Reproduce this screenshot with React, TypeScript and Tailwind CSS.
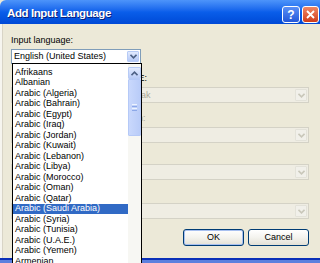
import React from "react";

const languages = [
  "Afrikaans",
  "Albanian",
  "Arabic (Algeria)",
  "Arabic (Bahrain)",
  "Arabic (Egypt)",
  "Arabic (Iraq)",
  "Arabic (Jordan)",
  "Arabic (Kuwait)",
  "Arabic (Lebanon)",
  "Arabic (Libya)",
  "Arabic (Morocco)",
  "Arabic (Oman)",
  "Arabic (Qatar)",
  "Arabic (Saudi Arabia)",
  "Arabic (Syria)",
  "Arabic (Tunisia)",
  "Arabic (U.A.E.)",
  "Arabic (Yemen)",
  "Armenian",
];

const selected = "Arabic (Saudi Arabia)";

function Chevron({ color }: { color: string }) {
  return (
    <svg width="7" height="5" viewBox="0 0 7 5">
      <path d="M0.5 0.8 L3.5 3.8 L6.5 0.8" fill="none" stroke={color} strokeWidth="1.6" />
    </svg>
  );
}

function ArrowButton({ disabled }: { disabled?: boolean }) {
  return disabled ? (
    <div className="w-[12px] h-[12px] mr-[1px] shrink-0 flex items-center justify-center border border-[#E3E2D9] bg-[#F1F0EA] rounded-[1px]">
      <Chevron color="#C9C7BA" />
    </div>
  ) : (
    <div className="w-[12px] h-[11px] mr-[1px] shrink-0 flex items-center justify-center border border-[#B7CBF6] bg-gradient-to-b from-[#E1EAFE] to-[#B4C8F6] rounded-[1px]">
      <Chevron color="#4D6185" />
    </div>
  );
}

function DisabledCombo({ text, indent }: { text?: string; indent?: string }) {
  return (
    <div className="h-[16px] w-[298px] border border-[#D4D2C6] bg-[#EFEDE3] flex items-center justify-between">
      <span className={`text-[9px] leading-none text-[#ACA899] ${indent ?? ""}`}>{text}</span>
      <ArrowButton disabled />
    </div>
  );
}

function XpButton({ label, isDefault }: { label: string; isDefault?: boolean }) {
  return (
    <div
      className={`shrink-0 w-[61px] h-[17px] rounded-[3px] border border-[#003C74] bg-gradient-to-b from-[#FFFFFF] via-[#F4F3EE] to-[#E3E0D6] flex items-center justify-center text-[9px] leading-none text-black ${
        isDefault ? "shadow-[inset_0_0_0_1px_#A8C0F0]" : ""
      }`}
    >
      {label}
    </div>
  );
}

function TitleBar() {
  return (
    <div className="h-[24px] shrink-0 flex items-center justify-between pl-[7px] pr-[1px] rounded-tl-[6px] bg-gradient-to-b from-[#4D94FA] via-[#0A5EEA] to-[#0049D6]">
      <span className="text-white font-bold text-[11.5px] tracking-[-0.4px] pt-[4px] [text-shadow:1px_1px_0_#0A1F7A]">
        Add Input Language
      </span>
      <div className="flex items-center gap-[2px] pt-[5px]">
        <div className="w-[18px] h-[17px] rounded-[3px] border border-white bg-gradient-to-b from-[#5A8FF6] to-[#2457D8] flex items-center justify-center text-white font-bold text-[12px] leading-none">
          ?
        </div>
        <div className="w-[17px] h-[17px] rounded-[3px] border border-white bg-gradient-to-b from-[#EF8664] to-[#CF3B17] flex items-center justify-center">
          <svg width="9" height="9" viewBox="0 0 9 9">
            <path d="M1 1 L8 8 M8 1 L1 8" stroke="white" strokeWidth="1.8" />
          </svg>
        </div>
      </div>
    </div>
  );
}

function DropList() {
  return (
    <div className="absolute left-[12px] top-[63px] w-[130px] h-[204px] border border-black bg-white flex">
      <div className="flex-1 pt-[3px]">
        {languages.map((l) => (
          <div
            key={l}
            className={`h-[10.5px] flex items-center pl-[2px] text-[9px] leading-none ${
              l === selected ? "bg-[#316AC5] text-white" : "text-black"
            }`}
          >
            {l}
          </div>
        ))}
      </div>
      <div className="w-[13px] pt-[3px] bg-[#F7F7F3] flex flex-col">
        <div className="h-[12px] flex items-center justify-center rounded-[1px] border border-[#B7CBF6] bg-gradient-to-b from-[#E1EAFE] to-[#BACCF7]">
          <svg width="7" height="5" viewBox="0 0 7 5">
            <path d="M0.5 4.2 L3.5 1.2 L6.5 4.2" fill="none" stroke="#4D6185" strokeWidth="1.6" />
          </svg>
        </div>
        <div className="h-[57px] flex flex-col items-center justify-center gap-[1px] rounded-[1px] border border-[#B5C9F7] bg-gradient-to-r from-[#C9D8FC] to-[#B9CCF8]">
          <div className="w-[5px] h-px bg-[#EEF4FE]" />
          <div className="w-[5px] h-px bg-[#8CA8E8]" />
          <div className="w-[5px] h-px bg-[#EEF4FE]" />
          <div className="w-[5px] h-px bg-[#8CA8E8]" />
        </div>
      </div>
    </div>
  );
}

export default function App() {
  return (
    <div className="relative w-[320px] h-[263px] overflow-hidden bg-[#ECE9D8] flex flex-col font-['Liberation_Sans',Arial,sans-serif]">
      <TitleBar />
      <div className="flex-1 flex">
        <div className="w-[3px] bg-[#F6F5EF] border-r border-[#D8D4C6]" />
        <div className="flex-1 flex flex-col pl-[8px] pt-[11px]">
          <div className="h-[11px] text-[9px] leading-[11px] text-black">Input language:</div>
          <div className="mt-[3px] h-[15px] w-[130px] border border-[#7F9DB9] bg-white flex items-center justify-between">
            <span className="text-[9px] leading-none pl-[2px] text-black">English (United States)</span>
            <ArrowButton />
          </div>

          <div className="mt-[9px] h-[11px] text-[9px] leading-[11px] text-black pl-[50px]">Keyboard layout/IME:</div>
          <div className="mt-[3px]">
            <DisabledCombo text="United States-Dvorak" indent="pl-[53px]" />
          </div>

          <div className="mt-[10px] h-[11px] text-[9px] leading-[11px] text-[#ACA899] pl-[38px]">Handwriting recognition:</div>
          <div className="mt-[3px]">
            <DisabledCombo />
          </div>

          <div className="mt-[21px]">
            <DisabledCombo />
          </div>

          <div className="mt-[23px]">
            <DisabledCombo />
          </div>

          <div className="mt-[10px] w-[298px] flex justify-end gap-[4px]">
            <XpButton label="OK" isDefault />
            <XpButton label="Cancel" />
          </div>
        </div>
      </div>
      <div className="h-[5px] shrink-0 flex flex-col">
        <div className="h-[2px] bg-[#0A2FB8]" />
        <div className="flex-1 bg-[#5C80DE]" />
      </div>
      <DropList />
    </div>
  );
}
